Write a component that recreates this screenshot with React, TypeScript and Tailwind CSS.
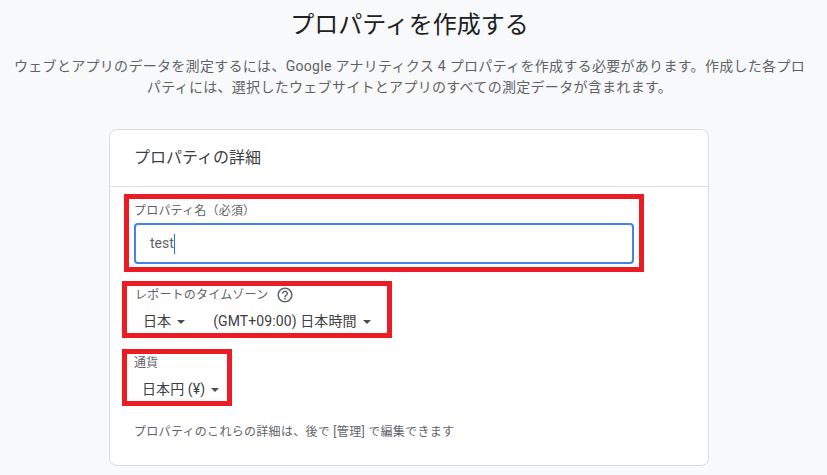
const jpFont = "font-['Roboto','Noto_Sans_CJK_JP',sans-serif]";

function Caret() {
  return <span className="ml-[6px] inline-block h-0 w-0 border-x-[4px] border-t-[4px] border-x-transparent border-t-[#4a4d51] align-middle" />;
}

function HelpIcon() {
  return (
    <svg width="18" height="18" viewBox="0 0 24 24" fill="#5f6368">
      <path d="M11 18h2v-2h-2v2zm1-16C6.48 2 2 6.48 2 12s4.48 10 10 10 10-4.48 10-10S17.52 2 12 2zm0 18c-4.41 0-8-3.59-8-8s3.59-8 8-8 8 3.59 8 8-3.59 8-8 8zm0-14c-2.21 0-4 1.79-4 4h2c0-1.1.9-2 2-2s2 .9 2 2c0 2-3 1.75-3 5h2c0-2.25 3-2.5 3-5 0-2.21-1.79-4-4-4z" />
    </svg>
  );
}

export default function App() {
  return (
    <div className={`${jpFont} h-[475px] w-[827px] overflow-hidden bg-[#f8f9fa]`}>
      <div className="w-[819px]">
        <h1 className="pt-[9px] text-center text-[24px] leading-[32px] font-normal text-[#202124]">プロパティを作成する</h1>
        <p className="mx-auto mt-[15px] w-[796px] text-center text-[14px] leading-[21px] tracking-[0.3px] text-[#5f6368]">
          ウェブとアプリのデータを測定するには、Google アナリティクス 4 プロパティを作成する必要があります。作成した各プロパティには、選択したウェブサイトとアプリのすべての測定データが含まれます。
        </p>
      </div>
      <div className="mt-[31px] ml-[109px] h-[337px] w-[600px] rounded-[8px] border border-[#dadce0] bg-white">
        <div className="flex h-[57px] items-center border-b border-[#dadce0] pl-[24px] text-[16px] text-[#3c4043]">プロパティの詳細</div>
        <div className="flex flex-col items-start pt-[7px]">
          <div className="ml-[14px] h-[78px] w-[520px] border-[5px] border-[#ed1c24] pt-[4px] pl-[5px]">
            <div className="text-[12px] leading-[16px] tracking-[0.2px] text-[#5f6368]">プロパティ名（必須）</div>
            <div className="mt-[4px] flex h-[41px] w-[500px] items-center rounded-[4px] border-2 border-[#4285e4] pl-[14px] text-[14px] text-[#5f6368]">
              test<span className="h-[20px] w-px bg-[#1a73e8]" />
            </div>
          </div>
          <div className="mt-[9px] ml-[12px] h-[57px] w-[270px] border-[5px] border-[#ed1c24] pl-[8px]">
            <div className="flex h-[18px] items-center text-[12px] tracking-[0.2px] text-[#5f6368]">
              レポートのタイムゾーン<span className="ml-[8px] flex"><HelpIcon /></span>
            </div>
            <div className="mt-[5px] flex items-center pl-[8px] text-[14px] leading-[24px] tracking-[0.1px] text-[#3c4043]">
              <span>日本<Caret /></span>
              <span className="ml-[28px]">(GMT+09:00) 日本時間<Caret /></span>
            </div>
          </div>
          <div className="mt-[11px] ml-[12px] h-[57px] w-[110px] border-[5px] border-[#ed1c24] pl-[7px]">
            <div className="flex h-[18px] items-center text-[12px] text-[#5f6368]">通貨</div>
            <div className="mt-[5px] pl-[8px] text-[14px] leading-[24px] tracking-[0.1px] text-[#3c4043]">日本円 (¥)<Caret /></div>
          </div>
          <p className="mt-[18px] ml-[24px] text-[12px] leading-[16px] tracking-[0.3px] text-[#5f6368]">プロパティのこれらの詳細は、後で [管理] で編集できます</p>
        </div>
      </div>
    </div>
  );
}
